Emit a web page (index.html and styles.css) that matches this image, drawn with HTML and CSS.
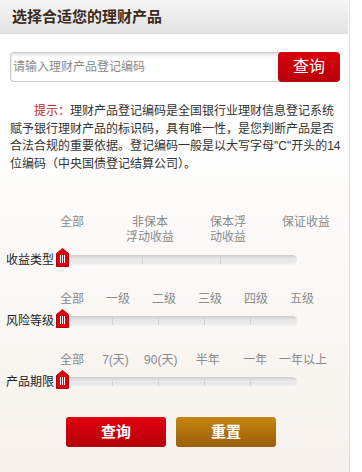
FILE: index.html
```html
<!DOCTYPE html>
<html lang="zh-CN">
<head>
<meta charset="utf-8">
<title>选择合适您的理财产品</title>
<link rel="stylesheet" href="styles.css">
</head>
<body>
<div class="panel">
  <div class="header"><h1 class="title">选择合适您的理财产品</h1></div>

  <div class="search">
    <input class="search-input" type="text" placeholder="请输入理财产品登记编码">
    <button class="search-btn" type="button">查询</button>
  </div>

  <p class="tip"><span class="tip-label">提示：</span>理财产品登记编码是全国银行业理财信息登记系统赋予银行理财产品的标识码，具有唯一性，是您判断产品是否合法合规的重要依据。登记编码一般是以大写字母"C"开头的14位编码（中央国债登记结算公司）。</p>

  <div class="filter filter-type">
    <div class="opts opts-4">
      <span class="opt">全部</span>
      <span class="opt">非保本<br>浮动收益</span>
      <span class="opt">保本浮<br>动收益</span>
      <span class="opt">保证收益</span>
    </div>
    <div class="row">
      <span class="row-label">收益类型</span>
      <div class="track track-4">
        <span class="seg"></span><span class="seg"></span><span class="seg"></span>
        <svg class="handle" width="13" height="19" viewBox="0 0 13 19"><path d="M6.5 0.5 L12.5 5.5 L12.5 18.5 L0.5 18.5 L0.5 5.5 Z" fill="#e0000c" stroke="#b0000a"/><path d="M4.5 7v8M6.5 7v8M8.5 7v8" stroke="#fff" stroke-width="1"/></svg>
      </div>
    </div>
  </div>

  <div class="filter filter-risk">
    <div class="opts opts-6">
      <span class="opt">全部</span>
      <span class="opt">一级</span>
      <span class="opt">二级</span>
      <span class="opt">三级</span>
      <span class="opt">四级</span>
      <span class="opt">五级</span>
    </div>
    <div class="row">
      <span class="row-label">风险等级</span>
      <div class="track track-6">
        <span class="seg"></span><span class="seg"></span><span class="seg"></span><span class="seg"></span><span class="seg"></span>
        <svg class="handle" width="13" height="19" viewBox="0 0 13 19"><path d="M6.5 0.5 L12.5 5.5 L12.5 18.5 L0.5 18.5 L0.5 5.5 Z" fill="#e0000c" stroke="#b0000a"/><path d="M4.5 7v8M6.5 7v8M8.5 7v8" stroke="#fff" stroke-width="1"/></svg>
      </div>
    </div>
  </div>

  <div class="filter filter-term">
    <div class="opts opts-term">
      <span class="opt">全部</span>
      <span class="opt">7(天)</span>
      <span class="opt">90(天)</span>
      <span class="opt">半年</span>
      <span class="opt">一年</span>
      <span class="opt">一年以上</span>
    </div>
    <div class="row">
      <span class="row-label">产品期限</span>
      <div class="track track-6">
        <span class="seg"></span><span class="seg"></span><span class="seg"></span><span class="seg"></span><span class="seg"></span>
        <svg class="handle" width="13" height="19" viewBox="0 0 13 19"><path d="M6.5 0.5 L12.5 5.5 L12.5 18.5 L0.5 18.5 L0.5 5.5 Z" fill="#e0000c" stroke="#b0000a"/><path d="M4.5 7v8M6.5 7v8M8.5 7v8" stroke="#fff" stroke-width="1"/></svg>
      </div>
    </div>
  </div>

  <div class="actions">
    <button class="btn btn-query" type="button">查询</button>
    <button class="btn btn-reset" type="button">重置</button>
  </div>
</div>
</body>
</html>
```

FILE: styles.css
```css
* { box-sizing: border-box; }
html, body { margin: 0; padding: 0; background: #fff; }
body {
  width: 362px;
  height: 472px;
  overflow: hidden;
  font-family: "Liberation Sans", "Noto Sans CJK SC", sans-serif;
}
.panel {
  width: 350px;
  height: 472px;
  border-right: 1px solid #dcdcdc;
  background: linear-gradient(#ffffff 0%, #ffffff 25%, #f6f1ec 100%);
}
.header {
  height: 34px;
  margin-right: 1px;
  background: linear-gradient(#f5f5f5, #e3e3e3);
  border-bottom: 1px solid #dadada;
}
.title {
  margin: 0;
  padding-left: 12px;
  font-size: 15px;
  line-height: 33px;
  font-weight: bold;
  color: #3a2a1c;
}
.search {
  display: flex;
  margin: 18px 0 0 10px;
  height: 30px;
}
.search-input {
  width: 270px;
  height: 30px;
  margin: 0;
  padding: 0 0 0 2px;
  border: 1px solid #c9c9c9;
  border-right: none;
  border-radius: 4px 0 0 4px;
  box-shadow: inset 0 2px 3px rgba(0,0,0,0.12);
  font-family: inherit;
  font-size: 12px;
  color: #333;
  background: #fff;
  outline: none;
}
.search-input::placeholder { color: #8a8a8a; }
.search-btn {
  width: 62px;
  height: 30px;
  margin: 0 0 0 -2px;
  padding: 0;
  border: none;
  border-radius: 4px;
  background: linear-gradient(#d8000c, #b8000a);
  color: #fff;
  font-family: inherit;
  font-size: 16px;
  line-height: 30px;
}
.tip {
  margin: 21px 0 0 10px;
  width: 333px;
  font-size: 12px;
  line-height: 17.5px;
  text-indent: 24px;
  color: #333;
}
.tip-label { color: #c0282a; }

.filter { position: relative; }
.filter-type { margin-top: 42px; }
.filter-risk { margin-top: 24px; }
.filter-term { margin-top: 24px; }

.opts {
  display: grid;
  font-size: 12px;
  line-height: 15px;
  color: #8a8a8a;
  justify-items: center;
  text-align: center;
  white-space: nowrap;
}
.opts-4 { grid-template-columns: repeat(4, 78px); margin-left: 33px; }
.opts-6 { grid-template-columns: repeat(6, 46px); margin-left: 49px; }
.opts-term { grid-template-columns: 43px 44px 46.5px 47.5px 47.5px 48px; margin-left: 50.5px; }

.row {
  display: flex;
  align-items: center;
  height: 20px;
  margin-top: 3px;
}
.filter-risk .row, .filter-term .row { margin-top: 2px; }
.row-label {
  width: 60px;
  padding-left: 6px;
  font-size: 12px;
  color: #222;
  white-space: nowrap;
}
.track {
  position: relative;
  display: flex;
  width: 237px;
  height: 9px;
  margin-top: 2px;
  border-radius: 5px;
  background: linear-gradient(#cdcdcd, #e6e6e6 40%, #eeeeee);
  box-shadow: 0 1px 0 #f4f4f4;
}
.seg { height: 9px; border-left: 1px solid #d2d2d2; }
.seg:first-child { border-left: none; }
.track-4 .seg:nth-child(1) { width: 82px; }
.track-4 .seg:nth-child(2) { width: 78px; }
.track-4 .seg:nth-child(3) { width: 77px; }
.track-6 .seg:nth-child(1) { width: 52px; }
.track-6 .seg:nth-child(2),
.track-6 .seg:nth-child(3),
.track-6 .seg:nth-child(4) { width: 46px; }
.track-6 .seg:nth-child(5) { width: 47px; }
.handle {
  position: absolute;
  left: -4px;
  top: -7px;
}

.actions {
  display: flex;
  gap: 10px;
  margin: 27px 0 0 66px;
}
.btn {
  width: 100px;
  height: 30px;
  margin: 0;
  padding: 0;
  border: none;
  border-radius: 3px;
  color: #fff;
  font-family: inherit;
  font-size: 15px;
  font-weight: bold;
  line-height: 30px;
}
.btn-query { background: linear-gradient(#e2000d, #b3000c); }
.btn-reset { background: linear-gradient(#c5850f, #9a5e08); }
```
